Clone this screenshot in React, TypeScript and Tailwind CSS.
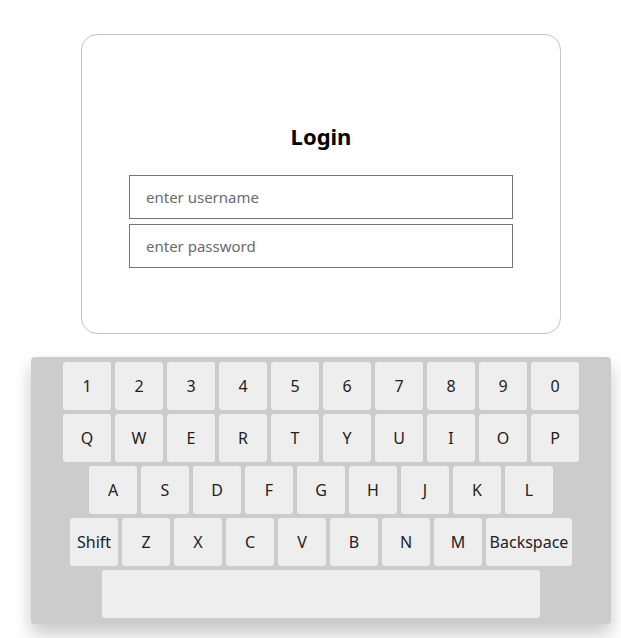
const rows: string[][] = [
  ["1", "2", "3", "4", "5", "6", "7", "8", "9", "0"],
  ["Q", "W", "E", "R", "T", "Y", "U", "I", "O", "P"],
  ["A", "S", "D", "F", "G", "H", "J", "K", "L"],
  ["Shift", "Z", "X", "C", "V", "B", "N", "M", "Backspace"],
];

function Key({ label }: { label: string }) {
  const wide = label === "Backspace";
  return (
    <button
      className={`h-12 ${wide ? "w-[86px]" : "w-12"} flex items-center justify-center rounded-[3px] bg-[#eeeeee] text-[16px] text-[#222]`}
    >
      {label}
    </button>
  );
}

export default function App() {
  return (
    <div className="bg-white min-h-[638px] pt-[34px] font-['Noto_Sans','Open_Sans',sans-serif]">
      {/* Login card */}
      <div className="ml-[81px] w-[480px] h-[300px] border border-[#c4c4c4] rounded-[16px] flex flex-col items-center pt-[86px]">
        <h1 className="text-[22px] leading-[30px] font-bold text-black mb-[24px]">Login</h1>
        <div className="flex flex-col gap-[5px]">
          <input
            className="w-[384px] h-[44px] border border-[#767676] px-4 text-[15px] text-[#333] placeholder:text-[#6b6b6b] outline-none"
            placeholder="enter username"
          />
          <input
            type="password"
            className="w-[384px] h-[44px] border border-[#767676] px-4 text-[15px] text-[#333] placeholder:text-[#6b6b6b] outline-none"
            placeholder="enter password"
          />
        </div>
      </div>

      {/* Keyboard */}
      <div className="mt-[23px] ml-[31px] w-[580px] bg-[#cccccc] rounded-[4px] pt-[5px] pb-[6px] flex flex-col items-center gap-1 shadow-[0_10px_18px_rgba(0,0,0,0.22)]">
        {rows.map((row, i) => (
          <div key={i} className="flex gap-1">
            {row.map((k) => (
              <Key key={k} label={k} />
            ))}
          </div>
        ))}
        <div className="flex">
          <button className="h-12 w-[438px] rounded-[3px] bg-[#eeeeee]" />
        </div>
      </div>
    </div>
  );
}
